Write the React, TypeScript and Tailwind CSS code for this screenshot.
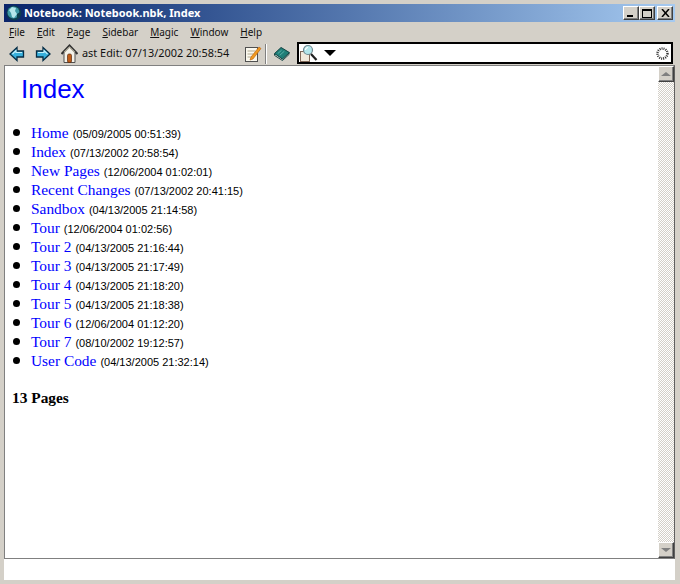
const menus = [
  { first: "F", rest: "ile" },
  { first: "E", rest: "dit" },
  { first: "P", rest: "age" },
  { first: "S", rest: "idebar" },
  { first: "M", rest: "agic" },
  { first: "W", rest: "indow" },
  { first: "H", rest: "elp" },
];

const pages = [
  { name: "Home", date: "(05/09/2005 00:51:39)" },
  { name: "Index", date: "(07/13/2002 20:58:54)" },
  { name: "New Pages", date: "(12/06/2004 01:02:01)" },
  { name: "Recent Changes", date: "(07/13/2002 20:41:15)" },
  { name: "Sandbox", date: "(04/13/2005 21:14:58)" },
  { name: "Tour", date: "(12/06/2004 01:02:56)" },
  { name: "Tour 2", date: "(04/13/2005 21:16:44)" },
  { name: "Tour 3", date: "(04/13/2005 21:17:49)" },
  { name: "Tour 4", date: "(04/13/2005 21:18:20)" },
  { name: "Tour 5", date: "(04/13/2005 21:18:38)" },
  { name: "Tour 6", date: "(12/06/2004 01:12:20)" },
  { name: "Tour 7", date: "(08/10/2002 19:12:57)" },
  { name: "User Code", date: "(04/13/2005 21:32:14)" },
];

const raised =
  "border border-t-white border-l-white border-r-[#404040] border-b-[#404040] bg-[#d4d0c8] shadow-[inset_-1px_-1px_0_#808080]";

function Globe() {
  return (
    <svg width="16" height="16" viewBox="0 0 16 16">
      <circle cx="8" cy="8" r="7.500" fill="#0d3c50" />
      <circle cx="7.500" cy="7.500" r="6" fill="#3d98a4" />
      <path d="M3 5l3-3 4 1-1 3 2 3-3 4-2-1-1-4z" fill="#b4e6ea" />
      <path d="M11 9l3-2v3l-3 3z" fill="#0d3c4c" />
    </svg>
  );
}

function Arrow({ flip }: { flip?: boolean }) {
  return (
    <svg width="16" height="16" viewBox="0 0 16 16" className={flip ? "-scale-x-100" : ""}>
      <path d="M1 8 8 1.500V5h6.500v6H8v3.500z" fill="#38b0dc" stroke="#062c44" strokeWidth="1.300" />
      <path d="M3.500 8 7 4.500V6.500h6" fill="none" stroke="#c4f0fc" strokeWidth="1.100" />
    </svg>
  );
}

function Home() {
  return (
    <svg width="17" height="19" viewBox="0 0 17 19">
      <path d="M3 9v9.500h11V9L8.500 3z" fill="#f4f2ea" stroke="#505050" />
      <path d="M.5 10 8.500 1.500 16.500 10" fill="none" stroke="#303030" strokeWidth="2" />
      <path d="M3 8.500 8.500 3l5.500 5.500" fill="none" stroke="#b8b4a4" strokeWidth="1.200" />
      <rect x="6.500" y="10" width="4" height="8.500" rx="1.500" fill="#c05c18" stroke="#5a2a0c" strokeWidth=".7" />
    </svg>
  );
}

function EditNote() {
  return (
    <svg width="18" height="18" viewBox="0 0 18 18">
      <rect x="1.500" y="2.500" width="12" height="14" fill="#faf8ee" stroke="#505050" />
      <path d="M3.500 6h8M3.500 9h6M3.500 12h5" stroke="#b0a890" />
      <path d="M7 12 15 2l2 1.500L9 14l-3 1z" fill="#f09a20" stroke="#b85c08" strokeWidth=".6" />
    </svg>
  );
}

function Book() {
  return (
    <svg width="16" height="14" viewBox="0 0 17 15">
      <path d="M.5 7.500v1.500L9 14.500l7-6.500V6z" fill="#e8e8e0" stroke="#0c3c3c" />
      <path d="M.5 7 7.500.5 16.500 6 9 13z" fill="#1f7f78" stroke="#0c3c3c" />
      <path d="M4 7l4-3.500M6 9l5-4.500" stroke="#5cb4ac" />
    </svg>
  );
}

function Magnifier() {
  return (
    <svg width="18" height="18" viewBox="0 0 18 18">
      <rect x=".5" y="7.500" width="9" height="10" fill="#f2eadc" stroke="#806858" />
      <circle cx="8" cy="6" r="4.500" fill="#b4e6ea" stroke="#708890" strokeWidth="1.200" />
      <path d="M5.500 6a2.500 2.500 0 0 1 2.500-2.500" fill="none" stroke="#fff" strokeWidth="1.200" />
      <path d="M11 10 16.500 16" stroke="#202020" strokeWidth="2.200" />
    </svg>
  );
}

function Spinner() {
  return (
    <svg width="13" height="13" viewBox="0 0 13 13">
      <circle cx="6.500" cy="6.500" r="5" fill="none" stroke="#303030" strokeWidth="2.400" strokeDasharray="1 1" />
    </svg>
  );
}

function ScrollButton({ up }: { up?: boolean }) {
  return (
    <div className={`flex h-4 w-4 shrink-0 items-center justify-center ${raised}`}>
      <div
        className={`h-0 w-0 border-x-[5px] border-x-transparent border-[#808080] ${up ? "border-b-[4px]" : "border-t-[4px]"}`}
      />
    </div>
  );
}

export default function App() {
  return (
    <div className="flex h-[584px] w-[680px] flex-col overflow-hidden border-y-[4px] border-l-[4px] border-r-[5px] border-[#d4d0c8] bg-[#d4d0c8] font-['Liberation_Sans',sans-serif]">
      <div className="flex h-[18px] shrink-0 items-center bg-gradient-to-r from-[#0a246a] to-[#a6caf0] pl-[2px] pr-[2px]">
        <Globe />
        <span className="ml-[2px] font-['Noto_Sans',sans-serif] text-[11px] font-bold text-white">
          Notebook: Notebook.nbk, Index
        </span>
        <div className="ml-auto flex">
          <div className={`flex h-[14px] w-4 items-end justify-center pb-[2px] ${raised}`}>
            <div className="mr-[2px] h-[2px] w-[6px] bg-black" />
          </div>
          <div className={`flex h-[14px] w-4 items-center justify-center ${raised}`}>
            <div className="h-[9px] w-[10px] border border-t-2 border-black" />
          </div>
          <div className={`ml-[2px] flex h-[14px] w-4 items-center justify-center ${raised}`}>
            <svg width="9" height="8" viewBox="0 0 9 8">
              <path d="M1 0l7 8M8 0 1 8" stroke="#000" strokeWidth="1.500" />
            </svg>
          </div>
        </div>
      </div>

      <div className="flex h-[20px] shrink-0 items-center gap-[12px] pl-[5px] pt-[1px] font-['Noto_Sans',sans-serif] text-[10px] text-[#111]">
        {menus.map((m) => (
          <span key={m.first}>
            <span className="underline">{m.first}</span>
            {m.rest}
          </span>
        ))}
      </div>

      <div className="flex h-[23px] shrink-0 items-center pl-[5px] pr-[2px]">
        <Arrow />
        <div className="ml-[10px]">
          <Arrow flip />
        </div>
        <div className="ml-[10px]">
          <Home />
        </div>
        <div className="ml-[4px] w-[162px] overflow-hidden whitespace-nowrap font-['Noto_Sans',sans-serif] text-[10.900px] text-[#111]">
          ast Edit: 07/13/2002 20:58:54
        </div>
        <EditNote />
        <div className="ml-[3px] h-[20px] w-[2px] border-l border-r border-l-[#808080] border-r-white" />
        <div className="ml-[7px]">
          <Book />
        </div>
        <div className="ml-[7px] flex h-[22px] flex-1 items-center self-start border-2 border-black bg-white pl-[1px] pr-[2px]">
          <Magnifier />
          <div className="ml-[6px] h-0 w-0 border-x-[6px] border-t-[6px] border-x-transparent border-t-black" />
          <div className="ml-auto">
            <Spinner />
          </div>
        </div>
      </div>

      <div className="flex min-h-0 flex-1 border-y border-l border-r border-y-[#808080] border-l-[#808080] border-r-[#606060]">
        <div className="min-w-0 flex-1 bg-white pl-[7px] font-['Liberation_Serif',serif] text-[15.400px] text-black">
          <h1 className="ml-[9px] mt-[6px] font-['Liberation_Sans',sans-serif] text-[26px] leading-[34px] text-[#0000ff]">
            Index
          </h1>
          <ul className="mt-[15px]">
            {pages.map((p) => (
              <li key={p.name} className="flex h-[19px] items-baseline whitespace-nowrap">
                <span className="mr-[11px] ml-[1px] h-[7px] w-[7px] -translate-y-[2px] rounded-full bg-black" />
                <span className="text-[#0000ff]">{p.name}</span>
                <span className="ml-[4px] font-['Liberation_Sans',sans-serif] text-[11px]">{p.date}</span>
              </li>
            ))}
          </ul>
          <p className="mt-[18px] font-bold">13 Pages</p>
        </div>
        <div className="flex w-4 shrink-0 flex-col bg-[repeating-conic-gradient(#d4d0c8_0_25%,#fff_0_50%)] bg-[length:2px_2px]">
          <ScrollButton up />
          <div className="flex-1" />
          <ScrollButton />
        </div>
      </div>

      <div className="h-[21px] shrink-0 bg-white" />
    </div>
  );
}
